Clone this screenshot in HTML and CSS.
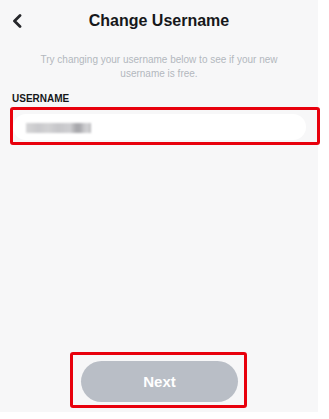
FILE: index.html
```html
<!DOCTYPE html>
<html lang="en">
<head>
<meta charset="utf-8">
<title>Change Username</title>
<link rel="stylesheet" href="styles.css">
</head>
<body>
<div class="screen">
  <header class="header">
    <button class="back" aria-label="Back">
      <svg width="10" height="14" viewBox="0 0 10 14"><path d="M8 1.5 L2.5 7 L8 12.5" fill="none" stroke="#26272b" stroke-width="2.8" stroke-linecap="round" stroke-linejoin="round"/></svg>
    </button>
    <h1 class="title">Change Username</h1>
    <span class="spacer-col"></span>
  </header>
  <p class="subtitle">Try changing your username below to see if your new<br>username is free.</p>
  <label class="label">USERNAME</label>
  <div class="highlight field-highlight">
    <div class="input">
      <span class="mosaic" aria-hidden="true"></span>
    </div>
  </div>
  <div class="grow"></div>
  <div class="highlight btn-highlight">
    <button class="next">Next</button>
  </div>
</div>
</body>
</html>
```
FILE: styles.css
```css
* { box-sizing: border-box; }
html, body { margin: 0; padding: 0; background: #ffffff; }
body { font-family: "Liberation Sans", Arial, sans-serif; }

.screen {
  width: 318px;
  height: 412px;
  background: #f7f7f8;
  display: flex;
  flex-direction: column;
}

.header {
  height: 40px;
  display: grid;
  grid-template-columns: 40px 1fr 40px;
  align-items: center;
}
.back {
  border: 0;
  background: none;
  padding: 0 0 0 12px;
  margin: 0;
  height: 40px;
  display: flex;
  align-items: center;
  margin-top: 1px;
}
.back svg { display: block; }
.title {
  margin: 0;
  text-align: center;
  font-size: 16px;
  line-height: 40px;
  font-weight: 700;
  color: #16171a;
}

.subtitle {
  margin: 13px 0 0;
  text-align: center;
  font-size: 10px;
  line-height: 14px;
  color: #b3b7be;
}

.label {
  display: block;
  margin: 12px 0 0 12px;
  font-size: 10px;
  line-height: 12px;
  font-weight: 700;
  color: #16171a;
}

.highlight {
  border: 3px solid #e8000c;
  border-radius: 3px;
}
.field-highlight {
  margin: 2px 0 0 10px;
  width: 310px;
  padding: 4px 11px 2px 0;
}
.input {
  height: 26px;
  background: #ffffff;
  border-radius: 13px;
  display: flex;
  align-items: center;
  padding-left: 13px;
}
.mosaic {
  display: block;
  width: 65px;
  height: 10px;
  margin-top: 1px;
  background: linear-gradient(90deg,
    #d6d6d8 0, #c9c9cc 12px, #d2d2d4 22px, #c6c6c9 32px,
    #cfcfd2 44px, #a9a9ad 50px, #a9a9ad 54px, #c8c8cb 58px,
    #d3d3d5 62px, #b5b5b9 65px);
  filter: blur(0.8px);
}

.grow { flex: 1; }

.btn-highlight {
  margin: 0 0 4px 70px;
  width: 177px;
  height: 56px;
  padding: 3px 6px 0 8px;
}
.next {
  display: block;
  width: 157px;
  height: 41px;
  margin-top: 3px;
  border: 0;
  border-radius: 21px;
  background: #b9bec6;
  color: #ffffff;
  font-family: "Liberation Sans", Arial, sans-serif;
  font-size: 15px;
  font-weight: 700;
  line-height: 41px;
  padding: 0;
}
```
